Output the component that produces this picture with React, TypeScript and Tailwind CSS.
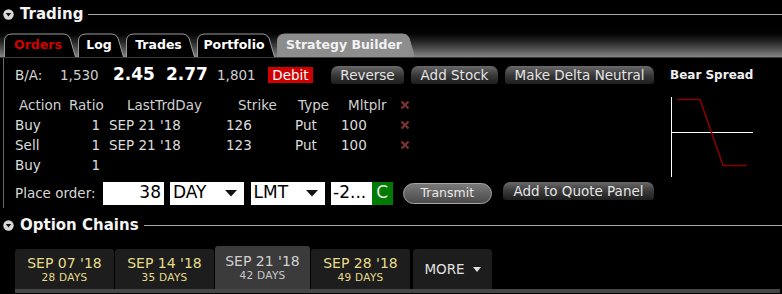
import React from "react";

const font = { fontFamily: '"DejaVu Sans", Verdana, sans-serif' };

function Disclosure() {
  return (
    <svg width="11" height="11" viewBox="0 0 11 11" className="shrink-0">
      <circle cx="5.5" cy="5.5" r="5.2" fill="#d8d8d8" />
      <path d="M2.8 4 L8.2 4 L5.5 7.6 Z" fill="#111" />
    </svg>
  );
}

function Tab({ label, w, active, red }: { label: string; w: number; active?: boolean; red?: boolean }) {
  return (
    <div className="relative h-[24px] flex items-center justify-center shrink-0" style={{ width: w }}>
      <svg className="absolute inset-0" width={w} height={24} viewBox={`0 0 ${w} 24`}>
        <path
          d={`M0.5 24 L0.5 8 Q0.5 1 8 1 L${w - 12} 1 Q${w - 8} 1 ${w - 6} 5 L${w - 0.5} 24`}
          fill={active ? "#8d8d8d" : "#000"}
          stroke={active ? "#8d8d8d" : "#9a9a9a"}
          strokeWidth="1"
        />
      </svg>
      <span
        className={`relative text-[12.5px] font-bold pr-[4px] ${red ? "text-[#d40000]" : active ? "text-[#f2f2f2]" : "text-white"}`}
      >
        {label}
      </span>
    </div>
  );
}

function GButton({ label, w }: { label: string; w: number }) {
  return (
    <div
      className="h-[18px] rounded-t-[7px] rounded-b-[3px] flex items-center justify-center text-[13.5px] text-[#e4e4e4] shrink-0 bg-gradient-to-b from-[#6a6a6a] via-[#3a3a3a] to-[#1e1e1e]"
      style={{ width: w }}
    >
      {label}
    </div>
  );
}

function XMark() {
  return (
    <svg width="10" height="10" viewBox="0 0 10 10">
      <path d="M1.5 1.5 L8.5 8.5 M8.5 1.5 L1.5 8.5" stroke="#7a3232" strokeWidth="2.4" />
    </svg>
  );
}

function Caret() {
  return (
    <svg width="12" height="7" viewBox="0 0 12 7">
      <path d="M0 0 L12 0 L6 6.5 Z" fill="#111" />
    </svg>
  );
}

function DateTab({ d, days, active }: { d: string; days: string; active?: boolean }) {
  return (
    <div
      className={`flex flex-col items-center justify-center rounded-t-[3px] shrink-0 ${active ? "h-[43px] bg-[#3b3b3b]" : "h-[40px] bg-[#1d1d1d]"}`}
      style={{ width: active ? 95 : 99 }}
    >
      <div className={`text-[14px] leading-[16px] ${active ? "text-[#d0d0d0]" : "text-[#e6dc8c]"}`}>{d}</div>
      <div className={`text-[10.5px] leading-[13px] tracking-[0.3px] ${active ? "text-[#c8c8c8]" : "text-[#e6dc8c]"}`}>{days}</div>
    </div>
  );
}

export default function App() {
  const rows = [
    { a: "Buy", r: "1", d: "SEP 21 '18", s: "126", t: "Put", m: "100", x: true },
    { a: "Sell", r: "1", d: "SEP 21 '18", s: "123", t: "Put", m: "100", x: true },
    { a: "Buy", r: "1", d: "", s: "", t: "", m: "", x: false },
  ];
  return (
    <div className="w-[782px] h-[294px] bg-black overflow-hidden text-white" style={font}>
      {/* Trading header */}
      <div className="h-[28px] flex items-center pl-[3px]">
        <Disclosure />
        <span className="ml-[6px] text-[15px] font-bold text-[#f4f4f4] leading-none">Trading</span>
        <div className="flex-1 h-[1px] bg-[#a8a8a8] ml-[5px] mt-[1px]" />
      </div>

      {/* Tab bar */}
      <div className="h-[30px] bg-gradient-to-b from-black via-[#2a2a2a] to-[#858585] flex items-end pl-[4px] gap-[2px] border-b border-[#3a3a3a]">
        <Tab label="Orders" w={72} red />
        <Tab label="Log" w={46} />
        <Tab label="Trades" w={69} />
        <Tab label="Portfolio" w={78} />
        <Tab label="Strategy Builder" w={138} active />
      </div>

      {/* Content */}
      <div className="flex h-[150px] ml-[3px] border-l border-[#6a6a6a]">
        <div className="flex flex-col pl-[11px] w-[650px]">
          {/* B/A row */}
          <div className="h-[28px] flex items-center mt-[3px]">
            <span className="text-[13.5px] text-[#d8d8d8] w-[45px]">B/A:</span>
            <span className="text-[13.5px] text-[#cfcfcf] w-[53px]">1,530</span>
            <span className="text-[17px] font-bold w-[53px]">2.45</span>
            <span className="text-[17px] font-bold w-[51px]">2.77</span>
            <span className="text-[13.5px] text-[#cfcfcf] w-[51px]">1,801</span>
            <span className="h-[16px] w-[45px] bg-[#d00000] text-[13.5px] text-white flex items-center justify-center">Debit</span>
            <div className="ml-[18px] flex gap-[7px]">
              <GButton label="Reverse" w={73} />
              <GButton label="Add Stock" w={87} />
              <GButton label="Make Delta Neutral" w={149} />
            </div>
          </div>
          {/* table */}
          <div className="mt-[6px] text-[13.5px] text-[#dcdcdc]">
            <div className="h-[20px] flex items-center text-[#d0d0d0]">
              <span className="w-[50px] ml-[4px]">Action</span>
              <span className="w-[58px]">Ratio</span>
              <span className="w-[111px]">LastTrdDay</span>
              <span className="w-[60px]">Strike</span>
              <span className="w-[50px]">Type</span>
              <span className="w-[52px]">Mltplr</span>
              <XMark />
            </div>
            {rows.map((r, i) => (
              <div key={i} className="h-[20px] flex items-center">
                <span className="w-[60px]">{r.a}</span>
                <span className="w-[25px] text-right">{r.r}</span>
                <span className="w-[117px] ml-[9px]">{r.d}</span>
                <span className="w-[69px]">{r.s}</span>
                <span className="w-[46px]">{r.t}</span>
                <span className="w-[59px]">{r.m}</span>
                {r.x && <XMark />}
              </div>
            ))}
          </div>
          {/* Place order */}
          <div className="h-[24px] flex items-center mt-[6px]">
            <span className="text-[13.5px] text-[#d8d8d8] w-[89px]">Place order:</span>
            <div className="w-[61px] h-[23px] bg-white text-black text-[17px] flex items-center justify-end pr-[3px]">38</div>
            <div className="ml-[6px] w-[74px] h-[23px] bg-white text-black text-[17px] flex items-center justify-between pl-[3px] pr-[7px]">
              <span>DAY</span>
              <Caret />
            </div>
            <div className="ml-[7px] w-[75px] h-[23px] bg-white text-black text-[17px] flex items-center justify-between pl-[3px] pr-[7px]">
              <span>LMT</span>
              <Caret />
            </div>
            <div className="ml-[6px] w-[41px] h-[23px] bg-white text-black text-[17px] flex items-center pl-[2px] overflow-hidden whitespace-nowrap">-2...</div>
            <div className="w-[21px] h-[23px] bg-[#007a00] text-[17px] text-[#e8e8e8] flex items-center justify-center">C</div>
            <div className="ml-[10px] w-[90px] h-[21px] rounded-full border border-[#a8a8a8] bg-gradient-to-b from-[#7a7a7a] to-[#4a4a4a] text-[12.5px] text-[#e8e8e8] flex items-center justify-center">
              Transmit
            </div>
            <div className="ml-[11px] -mt-[4px]">
              <GButton label="Add to Quote Panel" w={151} />
            </div>
          </div>
        </div>
        {/* right chart */}
        <div className="flex flex-col pl-[16px]">
          <div className="h-[28px] flex items-center mt-[3px] text-[12px] font-bold text-[#f0f0f0]">Bear Spread</div>
          <svg width="90" height="82" viewBox="0 0 90 82" className="mt-[7px]">
            <line x1="1.5" y1="1" x2="1.5" y2="81" stroke="#fff" strokeWidth="1" />
            <line x1="1" y1="36.5" x2="83" y2="36.5" stroke="#fff" strokeWidth="1" />
            <polyline points="7,3.5 30,3.5 53,69.5 77,69.5" fill="none" stroke="#8a0000" strokeWidth="1.6" />
          </svg>
        </div>
      </div>

      {/* Option chains header */}
      <div className="h-[20px] mt-[7px] flex items-center pl-[3px]">
        <Disclosure />
        <span className="ml-[6px] text-[15px] font-bold text-[#f4f4f4] leading-none">Option Chains</span>
        <div className="flex-1 h-[1px] bg-[#a8a8a8] ml-[5px]" />
      </div>

      {/* Date tabs */}
      <div className="mt-[11px] ml-[15px] w-[765px] flex flex-col">
        <div className="flex items-end gap-[1px] h-[43px]">
          <DateTab d="SEP 07 '18" days="28 DAYS" />
          <DateTab d="SEP 14 '18" days="35 DAYS" />
          <DateTab d="SEP 21 '18" days="42 DAYS" active />
          <DateTab d="SEP 28 '18" days="49 DAYS" />
          <div className="ml-[2px] w-[79px] h-[40px] bg-[#1d1d1d] rounded-t-[4px] flex items-center justify-center gap-[8px] text-[13.5px] text-[#e0e0e0]">
            <span>MORE</span>
            <svg width="8" height="5" viewBox="0 0 8 5"><path d="M0 0 L8 0 L4 5 Z" fill="#e0e0e0" /></svg>
          </div>
        </div>
        <div className="h-[4px] bg-[#464646]" />
      </div>
    </div>
  );
}
